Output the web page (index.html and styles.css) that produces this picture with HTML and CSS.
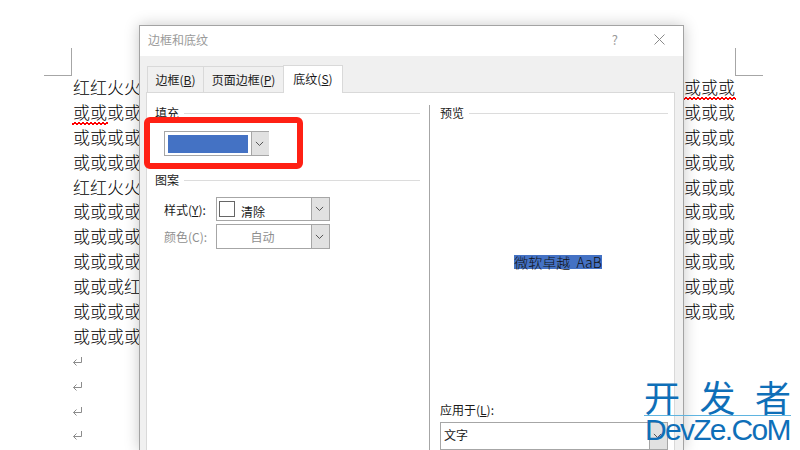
FILE: index.html
```html
<!DOCTYPE html>
<html lang="zh-CN">
<head>
<meta charset="utf-8">
<title>边框和底纹</title>
<link rel="stylesheet" href="styles.css">
</head>
<body>
<div class="doc">
  <div class="marks"><div class="mark mark-l"></div><div class="mark mark-r"></div></div>
  <div class="line"><span>红红火火或或或或</span><span><span class="wavy">或或或</span></span></div>
  <div class="line"><span><span class="wavy">或或</span>或或或或或或</span><span>或或或</span></div>
  <div class="line"><span>或或或或或或或或</span><span>或或或</span></div>
  <div class="line"><span>或或或或或或或或</span><span>或或或</span></div>
  <div class="line"><span>红红火火或或或或</span><span>或或或</span></div>
  <div class="line"><span>或或或或或或或或</span><span>或或或</span></div>
  <div class="line"><span>或或或或或或或或</span><span>或或或</span></div>
  <div class="line"><span>或或或或或或或或</span><span>或或或</span></div>
  <div class="line"><span>或或或红红火火或</span><span>或或或</span></div>
  <div class="line"><span>或或或或或或或或</span><span>或或或</span></div>
  <div class="line"><span>或或或或或或或或</span></div>
  <div class="line para"><svg class="ret" viewBox="0 0 11 11"><path d="M9.5 1V6.5H1.5M4.5 3.5L1.5 6.5L4.5 9.5"/></svg></div>
  <div class="line para"><svg class="ret" viewBox="0 0 11 11"><path d="M9.5 1V6.5H1.5M4.5 3.5L1.5 6.5L4.5 9.5"/></svg></div>
  <div class="line para"><svg class="ret" viewBox="0 0 11 11"><path d="M9.5 1V6.5H1.5M4.5 3.5L1.5 6.5L4.5 9.5"/></svg></div>
  <div class="line para"><svg class="ret" viewBox="0 0 11 11"><path d="M9.5 1V6.5H1.5M4.5 3.5L1.5 6.5L4.5 9.5"/></svg></div>
</div>

<section class="dialog">
  <header class="titlebar">
    <span class="title">边框和底纹</span>
    <span class="help">?</span>
    <svg class="close" viewBox="0 0 11 11"><path d="M.5 .5L10.5 10.5M10.5 .5L.5 10.5"/></svg>
  </header>
  <div class="dialog-body">
    <div class="tabs">
      <div class="tab tab-a">边框(<u>B</u>)</div>
      <div class="tab tab-b">页面边框(<u>P</u>)</div>
      <div class="tab tab-c active">底纹(<u>S</u>)</div>
    </div>
    <div class="panel">
      <div class="col-left">
        <div class="legend"><span>填充</span><i></i></div>
        <div class="combo fill-combo">
          <div class="fill-value"><div class="swatch"></div></div>
          <div class="arrow"><svg viewBox="0 0 10 6"><path d="M1 1L5 5L9 1"/></svg></div>
        </div>
        <div class="legend legend-pattern"><span>图案</span><i></i></div>
        <div class="field field-style">
          <label>样式(<u>Y</u>):</label>
          <div class="combo field-combo">
            <div class="value"><span class="checkbox"></span><span class="value-text">清除</span></div>
            <div class="arrow"><svg viewBox="0 0 10 6"><path d="M1 1L5 5L9 1"/></svg></div>
          </div>
        </div>
        <div class="field field-color">
          <label class="muted">颜色(C):</label>
          <div class="combo field-combo tall">
            <div class="value value-center muted">自动</div>
            <div class="arrow"><svg viewBox="0 0 10 6"><path d="M1 1L5 5L9 1"/></svg></div>
          </div>
        </div>
      </div>
      <div class="col-right">
        <div class="legend"><span>预览</span><i></i></div>
        <div class="preview"><span class="sample">微软卓越&nbsp;&nbsp;AaB</span></div>
        <div class="apply-label">应用于(<u>L</u>):</div>
        <div class="combo apply-combo">
          <div class="value value-apply">文字</div>
          <div class="arrow"><svg viewBox="0 0 10 6"><path d="M1 1L5 5L9 1"/></svg></div>
        </div>
      </div>
    </div>
  </div>
</section>

<div class="highlight"></div>

<div class="watermark">
  <div class="wm-cn"><span>开</span><span>发</span><span>者</span></div>
  <div class="wm-en">DevZe.CoM</div>
</div>
</body>
</html>
```

FILE: styles.css
```css
html, body {
  margin: 0;
  padding: 0;
}
body {
  position: relative;
  width: 800px;
  height: 450px;
  overflow: hidden;
  background: #fff;
  font-family: "Liberation Sans", "Noto Sans CJK SC", sans-serif;
  color: #222;
}
* { box-sizing: border-box; }

/* document behind the dialog */
.doc {
  height: 450px;
  overflow: hidden;
  padding: 48px 37px 0 44px;
}
.marks {
  display: flex;
  justify-content: space-between;
  height: 28px;
  margin-bottom: -1px;
}
.mark {
  width: 28px;
  height: 28px;
  border-bottom: 1px solid #a6a6a6;
}
.mark-l { border-right: 1px solid #a6a6a6; }
.mark-r { border-left: 1px solid #a6a6a6; }
.line {
  display: flex;
  justify-content: space-between;
  height: 24.9px;
  margin-left: 29px;
  margin-right: 28px;
  font-family: "Noto Sans CJK SC", sans-serif;
  font-size: 17px;
  font-weight: 300;
  line-height: 24.9px;
  color: #000;
  white-space: nowrap;
}
/* spell-check squiggle under the text */
.wavy {
  position: relative;
  display: inline-block;
}
.wavy::after {
  content: "";
  position: absolute;
  left: -1px;
  right: -1px;
  bottom: 0;
  height: 3px;
  background:
    linear-gradient(135deg, transparent 35%, #f00 35%, #f00 65%, transparent 65%) 0 0 / 4px 3px,
    linear-gradient(45deg, transparent 35%, #f00 35%, #f00 65%, transparent 65%) 2px 0 / 4px 3px;
  background-repeat: repeat-x;
}
.para { align-items: center; }
.ret {
  width: 11px;
  height: 11px;
  margin-left: -1px;
}
.ret path {
  fill: none;
  stroke: #8c8c8c;
  stroke-width: 1;
}

/* dialog window */
.dialog {
  position: absolute;
  left: 139px;
  top: 25px;
  width: 545px;
  height: 425px;
  display: flex;
  flex-direction: column;
  background: #f0f0f0;
  border: 1px solid #a3a3a3;
  border-bottom: 0;
  box-shadow: 0 0 14px rgba(0, 0, 0, .22);
  font-size: 12px;
  color: #1a1a1a;
  font-family: "Noto Sans CJK SC", sans-serif;
}
.titlebar {
  display: flex;
  align-items: center;
  height: 30px;
  padding: 0 18px 3px 8px;
  background: #fff;
}
.title {
  flex: 1;
  color: #9a9a9a;
}
.help {
  color: #9a9a9a;
  font-size: 13px;
  margin-right: 36px;
}
.close {
  width: 11px;
  height: 11px;
}
.close path {
  fill: none;
  stroke: #8a8a8a;
  stroke-width: 1;
}
.dialog-body {
  flex: 1;
  min-height: 0;
  display: flex;
  flex-direction: column;
  padding: 9px 8px 0 6px;
}
.tabs {
  display: flex;
  height: 28px;
  margin-left: 1px;
}
.tab {
  height: 27px;
  line-height: 26px;
  text-align: center;
  background: #f0f0f0;
  border: 1px solid #d9d9d9;
  border-bottom: 0;
  border-right: 0;
  margin-top: 1px;
}
.tab-a { width: 56px; }
.tab-b { width: 80px; }
.tab-c { width: 60px; }
.tab.active {
  position: relative;
  z-index: 1;
  height: 28px;
  margin-top: 0;
  background: #fff;
  border-right: 1px solid #d9d9d9;
}
.panel {
  flex: 1;
  min-height: 0;
  display: flex;
  margin-top: -1px;
  background: #fff;
  border: 1px solid #d9d9d9;
  border-bottom: 0;
  padding: 12px 6px 0 8px;
}
.col-left {
  width: 265px;
}
.col-right {
  flex: 1;
  display: flex;
  flex-direction: column;
  margin-left: 9px;
  padding-left: 10px;
  border-left: 1px solid #a6a6a6;
}
.legend {
  display: flex;
  align-items: center;
  gap: 5px;
  height: 16px;
  line-height: 16px;
}
.legend i {
  flex: 1;
  height: 1px;
  background: #dcdcdc;
}
.legend-pattern { margin-top: 16px; }

.combo {
  display: flex;
  background: #fff;
  border: 1px solid #a6a6a6;
}
.arrow {
  display: flex;
  align-items: center;
  justify-content: center;
  width: 18px;
  padding-right: 2px;
  background: #e1e1e1;
  border: 1px solid #a6a6a6;
  border-width: 0 0 0 1px;
  flex: none;
}
.arrow svg {
  width: 9px;
  height: 5.4px;
}
.arrow path {
  fill: none;
  stroke: #444;
  stroke-width: 1;
}
.fill-combo {
  width: 105px;
  height: 25px;
  margin: 10px 0 0 9px;
}
.fill-value {
  flex: 1;
  padding: 3px;
}
.swatch {
  width: 80px;
  height: 18px;
  background: #4472c4;
}
.field {
  display: flex;
  align-items: center;
  padding-left: 9px;
}
.field label {
  width: 52px;
  flex: none;
}
.field-style { margin-top: 9px; }
.field-color { margin-top: 3px; }
.field-combo {
  width: 114px;
  height: 24px;
}
.field-combo.tall { height: 25px; }
.value {
  flex: 1;
  display: flex;
  align-items: center;
  padding-left: 2px;
}
.value-center {
  justify-content: center;
  padding: 0 3px 0 0;
}
.value-apply {
  padding: 0 0 3px 3px;
}
.checkbox {
  width: 16px;
  height: 16px;
  border: 1px solid #666;
  margin-right: 6px;
  flex: none;
}
.value-text { position: relative; top: 2px; }
.muted { color: #8f8f8f; }

.preview {
  height: 281px;
  display: flex;
  align-items: center;
  justify-content: center;
}
.sample {
  height: 14px;
  margin-left: 8px;
  line-height: 14px;
  background: #4472c4;
  color: #111;
  font-size: 14px;
  font-weight: 300;
  white-space: nowrap;
}
.apply-label {
  height: 16px;
  line-height: 16px;
}
.apply-combo {
  width: 228px;
  height: 28px;
  margin-top: 4px;
  flex: none;
}

/* annotation drawn over the screenshot */
.highlight {
  position: absolute;
  left: 144px;
  top: 117px;
  width: 159px;
  height: 52px;
  border: 6px solid #ff2014;
  border-radius: 6px;
}

.watermark {
  position: absolute;
  left: 644px;
  top: 381px;
  width: 147px;
  color: #0f6fb8;
}
.wm-cn {
  display: flex;
  justify-content: space-between;
  height: 35px;
  line-height: 31px;
  font-family: "Noto Sans CJK SC", sans-serif;
  font-size: 36px;
  border-bottom: 1px solid #5fb4e0;
}
.wm-en {
  font-family: "Liberation Sans", sans-serif;
  font-size: 30px;
  line-height: 27px;
  letter-spacing: -1.7px;
  padding-left: 1px;
  white-space: nowrap;
}
```
